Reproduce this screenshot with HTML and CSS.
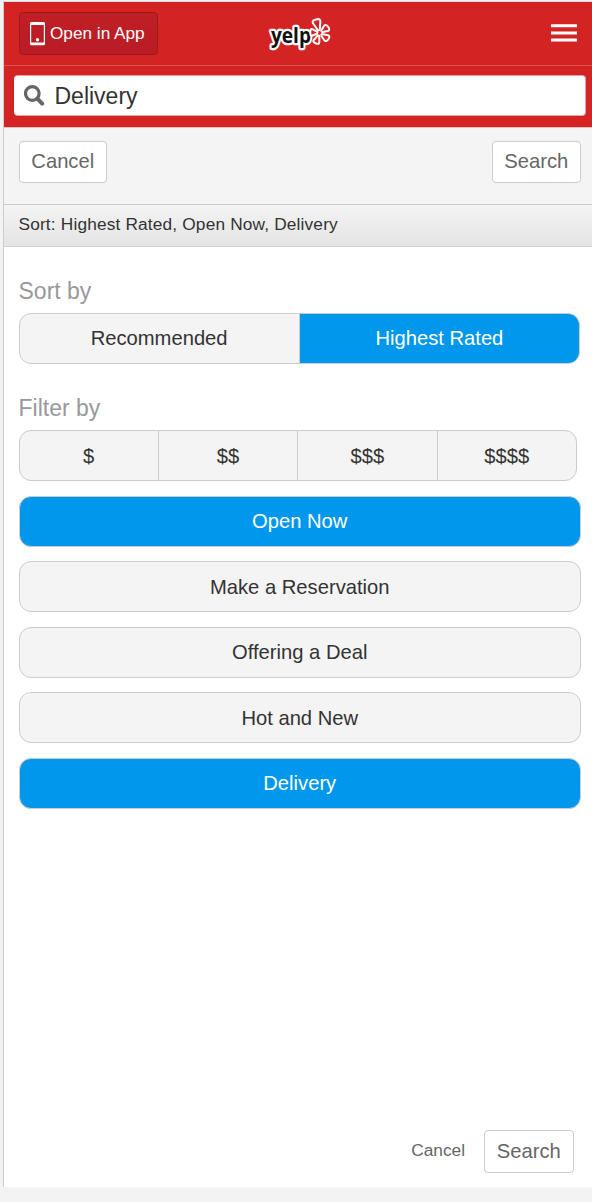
FILE: index.html
```html
<!DOCTYPE html>
<html lang="en">
<head>
<meta charset="utf-8">
<title>Yelp search filters</title>
<link rel="stylesheet" href="styles.css">
</head>
<body>
<div class="page">
  <header class="topbar">
    <a class="open-app">
      <svg class="phone" width="15" height="24" viewBox="0 0 15 24"><path fill="#fff" fill-rule="evenodd" d="M1.5 0h12Q15 0 15 1.5v20.200Q15 23.200 13.500 23.200h-12Q0 23.200 0 21.700V1.500Q0 0 1.500 0ZM1.200 3v17.400h12.600V3Z"/><circle cx="7.500" cy="17.700" r="1.700" fill="#fff"/></svg>
      <span>Open in App</span>
    </a>
    <svg class="logo" width="66" height="36" viewBox="0 0 66 36">
      <text class="wordmark" x="4" y="27" textLength="40" lengthAdjust="spacingAndGlyphs">yelp</text>
      <g class="petals" transform="translate(52.500 16.500)">
        <path d="M-1.800-2.500-6.700-9.500Q-7.500-11.500-5-12.500L-1.500-13.500Q1-13.500 .800-11L.300-3Q-.500-1.500-1.800-2.500Z"/>
        <path d="M2-2.500 4.500-6.500Q6.500-8.500 8.500-6 11-2.500 8.500-1.500L3-.500Q1.500-1 2-2.500Z"/>
        <path d="M2.500 1.500 8.500 2.700Q11 3.500 9 6.500 7 9.700 5 8L2 3.500Q1.500 2 2.500 1.500Z"/>
        <path d="M-.200 3.500V9.800Q-.200 12-3.200 11-7.500 9.500-5.700 7.500L-1.800 3.200Q-.500 2.500-.200 3.500Z"/>
        <path d="M-2.500 1.300-7.500 3.300Q-9.200 3.800-9.200 0-9.200-4-7.300-3.300L-2.500-.800Q-1.500 .300-2.500 1.300Z"/>
      </g>
    </svg>
    <svg class="menu" width="26" height="18" viewBox="0 0 26 18"><path fill="#fff" d="M0 .200h26v3H0zM0 7.400h26v3H0zM0 14.400h26v3H0z"/></svg>
  </header>
  <div class="searchbar">
    <div class="field">
      <svg width="21" height="22" viewBox="0 0 21 22" fill="none" stroke="#666"><circle cx="8.300" cy="8.500" r="6.800" stroke-width="3.200"/><path stroke-width="4" stroke-linecap="round" d="m13.300 13.700 4.900 4.900"/></svg>
      <span>Delivery</span>
    </div>
  </div>
  <div class="actions"><a class="btn">Cancel</a><a class="btn btn-search">Search</a></div>
  <div class="summary">Sort: Highest Rated, Open Now, Delivery</div>
  <main class="filters">
    <h2>Sort by</h2>
    <div class="segmented sort"><a>Recommended</a><a class="on">Highest Rated</a></div>
    <h2 class="filter-title">Filter by</h2>
    <div class="segmented prices"><a>$</a><a>$$</a><a>$$$</a><a>$$$$</a></div>
    <div class="options">
      <a class="option on">Open Now</a>
      <a class="option">Make a Reservation</a>
      <a class="option">Offering a Deal</a>
      <a class="option">Hot and New</a>
      <a class="option on">Delivery</a>
    </div>
  </main>
  <footer class="bottom"><a class="cancel-link">Cancel</a><a class="btn btn-search">Search</a></footer>
</div>
</body>
</html>
```
FILE: styles.css
```css
* { box-sizing: border-box; }
body {
  margin: 0;
  height: 1202px;
  padding: 1px 0 0 3px;
  overflow: hidden;
  background: #f3f3f3;
  color: #333;
  font-family: "Liberation Sans", Arial, sans-serif;
}
.page {
  display: flex;
  flex-direction: column;
  height: 1186px;
  border-left: 1px solid #ccc;
  border-top: 1px solid #ddd;
  background: #fff;
}
.topbar {
  display: flex;
  justify-content: space-between;
  align-items: center;
  height: 64px;
  padding: 0 15px 1px 14.500px;
  background: #d32323;
  border-bottom: 1px solid #dc4f4f;
}
.open-app {
  display: flex;
  align-items: center;
  gap: 5px;
  width: 139px;
  height: 43px;
  padding: 1px 0 0 10.500px;
  border: 1px solid #981b1e;
  border-radius: 4px;
  background: linear-gradient(#c01f25, #b91c25);
  color: #fff;
  font-size: 17.200px;
  white-space: nowrap;
}
.phone { flex: none; }
.logo { margin: 2px 108px 0 0; }
.petals { fill: #d32323; stroke: #fff; stroke-width: 2; stroke-linejoin: round; }
.wordmark {
  font: 700 20.500px "Open Sans", sans-serif;
  fill: #111;
  stroke: #fff;
  stroke-width: 4.500px;
  stroke-linejoin: round;
  paint-order: stroke;
}
.searchbar {
  height: 61px;
  padding: 9px 6px 0 10px;
  background: #d32323;
}
.field {
  display: flex;
  align-items: center;
  gap: 9.500px;
  height: 41px;
  padding: 1px 0 0 10px;
  border: 1px solid #eea0a0;
  border-top-color: #e9a0a0;
  border-left: 0;
  border-radius: 4px;
  background: #fff;
  font-size: 23px;
}
.actions {
  display: flex;
  justify-content: space-between;
  align-items: flex-start;
  height: 78px;
  padding: 13px 11px 0 14.500px;
  background: #f4f4f4;
  border-bottom: 1px solid #ccc;
  border-top: 1px solid #f5bcbc;
}
.actions .btn { margin-top: -.500px; }
.btn {
  display: grid;
  place-items: center;
  width: 88.500px;
  height: 42.500px;
  border: 1.5px solid #ccc;
  border-radius: 4px;
  background: #fff;
  color: #666;
  font-size: 20.2px;
}
.btn-search { width: 89.500px; }
.summary {
  height: 42px;
  padding-left: 14.500px;
  border-bottom: 1px solid #d0d0d0;
  background: linear-gradient(#f4f4f4, #e4e4e4);
  font-size: 17.300px;
  line-height: 39px;
  letter-spacing: .16px;
}
.filters { padding: 31px 11px 0 14.500px; }
h2 {
  margin: 0 0 8.500px;
  color: #999;
  font-size: 23px;
  font-weight: 400;
  line-height: 27px;
}
.filter-title { margin-top: 30.500px; }
.segmented {
  display: flex;
  height: 51px;
  border: 1.500px solid #ccc;
  border-radius: 12px;
  overflow: hidden;
  background: #f4f4f4;
}
.segmented a {
  display: grid;
  place-items: center;
  flex: 1;
  border-left: 1.500px solid #ccc;
  font-size: 20.200px;
}
.segmented a:first-child { border-left: 0; }
.sort { width: 561.500px; margin-top: -.500px; }
.sort a { padding-bottom: 1px; }
.prices { width: 558.500px; }
.prices a { padding-top: 1px; }
.options { display: grid; gap: 14.500px; margin-top: 14.500px; }
.option {
  display: grid;
  place-items: center;
  height: 51px;
  padding-top: 1px;
  border: 1.500px solid #ccc;
  border-radius: 12px;
  background: #f4f4f4;
  font-size: 20.200px;
}
.option.on, .segmented .on { background: #0097ec; color: #fff; }
.bottom {
  display: flex;
  justify-content: flex-end;
  gap: 19px;
  margin-top: auto;
  padding: 0 18.500px 14.500px 0;
}
.cancel-link { color: #666; font-size: 17.300px; line-height: 40px; }
```
